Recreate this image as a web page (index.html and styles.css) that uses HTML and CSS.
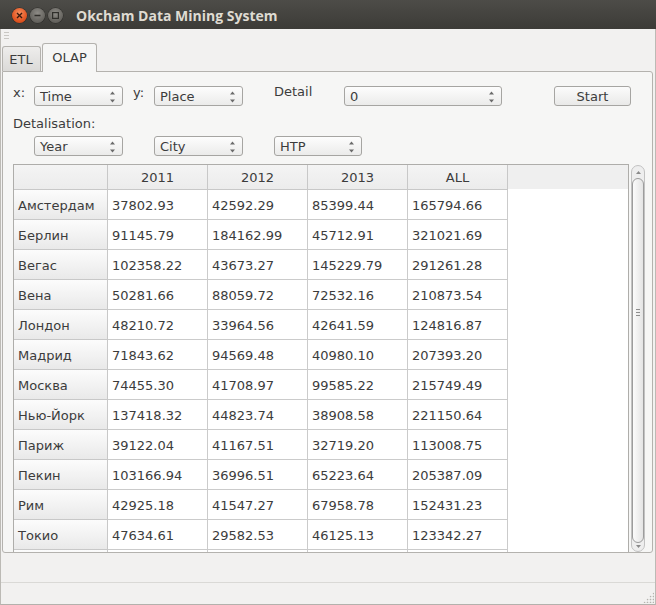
FILE: index.html
```html
<!DOCTYPE html>
<html>
<head>
<meta charset="utf-8">
<title>Okcham Data Mining System</title>
<link rel="stylesheet" href="styles.css">
</head>
<body>
<div class="titlebar">
  <span class="wbtn close"><svg width="15" height="15" viewBox="0 0 15 15"><path d="M5 5l5 5M10 5l-5 5" stroke="#3b1a0e" stroke-width="1.4" fill="none"/></svg></span>
  <span class="wbtn gray"><svg width="15" height="15" viewBox="0 0 15 15"><path d="M4.5 7.5h6" stroke="#302f2b" stroke-width="1.5"/></svg></span>
  <span class="wbtn gray"><svg width="15" height="15" viewBox="0 0 15 15"><rect x="4.6" y="4.6" width="5.8" height="5.8" fill="none" stroke="#302f2b" stroke-width="1.2"/></svg></span>
  <span class="title">Okcham Data Mining System</span>
</div>
<div class="client">
  <div class="toolbar"><span class="grip"></span></div>
  <div class="tabbar">
    <div class="tab">ETL</div>
    <div class="tab active">OLAP</div>
  </div>
  <div class="pane">
    <div class="row1">
      <span class="lbl lx">x:</span>
      <div class="combo w89"><span>Time</span><svg class="arr" width="7" height="20" viewBox="0 0 7 20"><path d="M1 8.5l2.5-3 2.5 3z M1 13.5l2.5 3 2.5-3z" fill="#6a6a6a"/></svg></div>
      <span class="lbl ly">y:</span>
      <div class="combo w89"><span>Place</span><svg class="arr" width="7" height="20" viewBox="0 0 7 20"><path d="M1 8.5l2.5-3 2.5 3z M1 13.5l2.5 3 2.5-3z" fill="#6a6a6a"/></svg></div>
      <span class="lbl ldet">Detail</span>
      <div class="combo w158"><span>0</span><svg class="arr" width="7" height="20" viewBox="0 0 7 20"><path d="M1 8.5l2.5-3 2.5 3z M1 13.5l2.5 3 2.5-3z" fill="#6a6a6a"/></svg></div>
      <div class="btn">Start</div>
    </div>
    <div class="lbl-detal">Detalisation:</div>
    <div class="row2">
      <div class="combo w89"><span>Year</span><svg class="arr" width="7" height="20" viewBox="0 0 7 20"><path d="M1 8.5l2.5-3 2.5 3z M1 13.5l2.5 3 2.5-3z" fill="#6a6a6a"/></svg></div>
      <div class="combo w89"><span>City</span><svg class="arr" width="7" height="20" viewBox="0 0 7 20"><path d="M1 8.5l2.5-3 2.5 3z M1 13.5l2.5 3 2.5-3z" fill="#6a6a6a"/></svg></div>
      <div class="combo w88"><span>HTP</span><svg class="arr" width="7" height="20" viewBox="0 0 7 20"><path d="M1 8.5l2.5-3 2.5 3z M1 13.5l2.5 3 2.5-3z" fill="#6a6a6a"/></svg></div>
    </div>
    <div class="viewrow">
      <div class="tableview">
        <table>
          <colgroup><col class="c0"><col class="cn"><col class="cn"><col class="cn"><col class="cn"></colgroup>
          <thead>
            <tr><th></th><th>2011</th><th>2012</th><th>2013</th><th>ALL</th></tr>
          </thead>
          <tbody>
            <tr><th>Амстердам</th><td>37802.93</td><td>42592.29</td><td>85399.44</td><td>165794.66</td></tr>
            <tr><th>Берлин</th><td>91145.79</td><td>184162.99</td><td>45712.91</td><td>321021.69</td></tr>
            <tr><th>Вегас</th><td>102358.22</td><td>43673.27</td><td>145229.79</td><td>291261.28</td></tr>
            <tr><th>Вена</th><td>50281.66</td><td>88059.72</td><td>72532.16</td><td>210873.54</td></tr>
            <tr><th>Лондон</th><td>48210.72</td><td>33964.56</td><td>42641.59</td><td>124816.87</td></tr>
            <tr><th>Мадрид</th><td>71843.62</td><td>94569.48</td><td>40980.10</td><td>207393.20</td></tr>
            <tr><th>Москва</th><td>74455.30</td><td>41708.97</td><td>99585.22</td><td>215749.49</td></tr>
            <tr><th>Нью-Йорк</th><td>137418.32</td><td>44823.74</td><td>38908.58</td><td>221150.64</td></tr>
            <tr><th>Париж</th><td>39122.04</td><td>41167.51</td><td>32719.20</td><td>113008.75</td></tr>
            <tr><th>Пекин</th><td>103166.94</td><td>36996.51</td><td>65223.64</td><td>205387.09</td></tr>
            <tr><th>Рим</th><td>42925.18</td><td>41547.27</td><td>67958.78</td><td>152431.23</td></tr>
            <tr><th>Токио</th><td>47634.61</td><td>29582.53</td><td>46125.13</td><td>123342.27</td></tr>
            <tr><th></th><td></td><td></td><td></td><td></td></tr>
          </tbody>
        </table>
      </div>
      <div class="scrollbar">
        <div class="sb-up"><svg width="5" height="3" viewBox="0 0 5 3"><path d="M0 3l2.5-3 2.5 3z" fill="#8a8a8a"/></svg></div>
        <div class="thumb"><span class="tgrip"></span></div>
        <div class="sb-down"><svg width="5" height="3" viewBox="0 0 5 3"><path d="M0 0l2.5 3 2.5-3z" fill="#8a8a8a"/></svg></div>
      </div>
    </div>
  </div>
  <div class="gap"></div>
  <div class="status"><span class="sizegrip"></span></div>
</div>
</body>
</html>
```
FILE: styles.css
```css
* { box-sizing: border-box; }
html, body { margin: 0; padding: 0; }
body {
  width: 656px;
  height: 605px;
  overflow: hidden;
  font-family: "DejaVu Sans", "Liberation Sans", sans-serif;
  font-size: 13px;
  color: #3c3c3c;
  background: #f2f1f0;
}

.titlebar {
  height: 29px;
  display: flex;
  align-items: center;
  padding: 2px 0 0 12px;
  background: linear-gradient(#4d4c48, #3c3b37);
}
.wbtn {
  width: 15px;
  height: 15px;
  border-radius: 50%;
  margin-right: 3px;
  display: flex;
  align-items: center;
  justify-content: center;
}
.wbtn svg { display: block; }
.close {
  background: radial-gradient(circle at 50% 35%, #f7905f 0%, #e55a27 55%, #c6400f 100%);
  box-shadow: 0 0 0 0.5px #2e2d2a;
}
.gray {
  background: radial-gradient(circle at 50% 35%, #8d8b86 0%, #6c6a65 55%, #55534e 100%);
  box-shadow: 0 0 0 0.5px #2e2d2a;
}
.title {
  margin-left: 10px;
  color: #dfdbd2;
  font-family: "Open Sans", "DejaVu Sans", sans-serif;
  font-weight: bold;
  font-size: 14px;
}

.client {
  height: 576px;
  display: flex;
  flex-direction: column;
  border-left: 1px solid #bcbab5;
  border-right: 1px solid #bcbab5;
  border-bottom: 1px solid #b3b1ac;
}
.toolbar {
  height: 14px;
  flex: none;
  padding: 3px 0 0 3px;
}
.grip {
  display: block;
  width: 5px;
  height: 8px;
  background: repeating-linear-gradient(#c9c7c3 0 1px, transparent 1px 3px);
}

.tabbar {
  height: 28px;
  flex: none;
  display: flex;
  align-items: flex-end;
  padding-left: 1px;
}
.tab {
  height: 25px;
  width: 39px;
  border: 1px solid #b4b2ae;
  border-bottom: none;
  border-radius: 3px 3px 0 0;
  background: linear-gradient(#eeedec, #dbdad8);
  display: flex;
  align-items: center;
  justify-content: center;
  padding: 1px 1px 0 0;
}
.tab.active {
  width: 55px;
  height: 29px;
  margin-left: 1px;
  margin-bottom: -1px;
  position: relative;
  z-index: 1;
  background: #f6f6f5;
  padding: 0 0 2px 0;
}

.pane {
  height: 482px;
  flex: none;
  margin: 0 2px 0 1px;
  border: 1px solid #b4b2ae;
  border-radius: 0 3px 3px 3px;
  background: #f6f6f5;
  padding: 14px 0 0 10px;
  display: flex;
  flex-direction: column;
}

.row1, .row2 {
  display: flex;
  align-items: center;
  height: 20px;
  flex: none;
}
.row2 { margin-left: 21px; gap: 31px; }
.lbl {
  align-self: flex-start;
  line-height: 15px;
  margin-top: -1px;
}
.lx { width: 21px; }
.ly { width: 21px; margin-left: 10px; }
.ldet { width: 70px; margin-left: 31px; margin-top: -2px; }

.combo {
  height: 20px;
  display: flex;
  align-items: center;
  justify-content: space-between;
  border: 1px solid #a6a5a2;
  border-radius: 3px;
  background: linear-gradient(#fdfdfd, #ebebea);
  padding: 0 5px 0 5px;
  line-height: 15px;
}
.combo .arr { display: block; margin-right: 1px; }
.w89 { width: 89px; }
.w88 { width: 88px; }
.w158 { width: 158px; }
.btn {
  width: 77px;
  height: 20px;
  margin-left: 52px;
  border: 1px solid #a6a5a2;
  border-radius: 3px;
  background: linear-gradient(#fbfbfb, #e9e9e8);
  display: flex;
  align-items: center;
  justify-content: center;
}

.lbl-detal {
  height: 15px;
  line-height: 15px;
  margin: 10px 0 5px 0;
  flex: none;
}

.viewrow {
  display: flex;
  margin-top: 8px;
  height: 388px;
  flex: none;
}
.tableview {
  width: 616px;
  height: 388px;
  border: 1px solid #aeadaa;
  border-bottom: none;
  overflow: hidden;
  background: linear-gradient(#efefef, #efefef) 0 0 / 100% 24px no-repeat, #ffffff;
}
table {
  border-collapse: separate;
  border-spacing: 0;
  table-layout: fixed;
  width: 494px;
}
.c0 { width: 94px; }
.cn { width: 100px; }
th, td {
  border-right: 1px solid #cbcbcb;
  border-bottom: 1px solid #cbcbcb;
  padding: 2px 0 0 4px;
  font-weight: normal;
  white-space: nowrap;
  overflow: hidden;
}
thead tr { height: 25px; }
thead th {
  text-align: center;
  padding: 1px 0 0 0;
  background: linear-gradient(#f4f4f4, #ececec);
  border-color: #c8c8c8;
}
tbody tr { height: 30px; }
tbody th {
  text-align: left;
  background: linear-gradient(#fcfcfc, #e9e9e9);
  border-color: #c8c8c8;
}
td { background: #ffffff; }

.scrollbar {
  width: 14px;
  height: 387px;
  margin: 1px 0 0 2px;
  border: 1px solid #c2c2c2;
  border-radius: 7px;
  background: #eeeeee;
  display: flex;
  flex-direction: column;
}
.sb-up {
  height: 12px;
  display: flex;
  justify-content: center;
  align-items: center;
  padding-top: 1px;
}
.sb-down {
  height: 8px;
  display: flex;
  justify-content: center;
  align-items: center;
  padding-bottom: 2px;
}
.sb-up svg, .sb-down svg { display: block; }
.thumb {
  flex: 1;
  border: 1px solid #9c9c9c;
  border-radius: 6px;
  background: linear-gradient(90deg, #fbfbfb, #e4e4e4);
  display: flex;
  align-items: flex-start;
  justify-content: center;
  padding-top: 130px;
}
.tgrip {
  width: 4px;
  height: 7px;
  background: repeating-linear-gradient(#8e8e8e 0 1px, transparent 1px 3px);
}

.gap { height: 29px; flex: none; }
.status {
  height: 22px;
  flex: none;
  border-top: 1px solid #dad9d6;
  display: flex;
  justify-content: flex-end;
  align-items: flex-end;
  padding: 0 1px 1px 0;
}
.sizegrip {
  width: 11px;
  height: 11px;
  background: radial-gradient(circle, #b5b3ae 0.7px, transparent 1.1px) 0 0 / 3px 3px;
  clip-path: polygon(100% 0, 100% 100%, 0 100%);
}
```
